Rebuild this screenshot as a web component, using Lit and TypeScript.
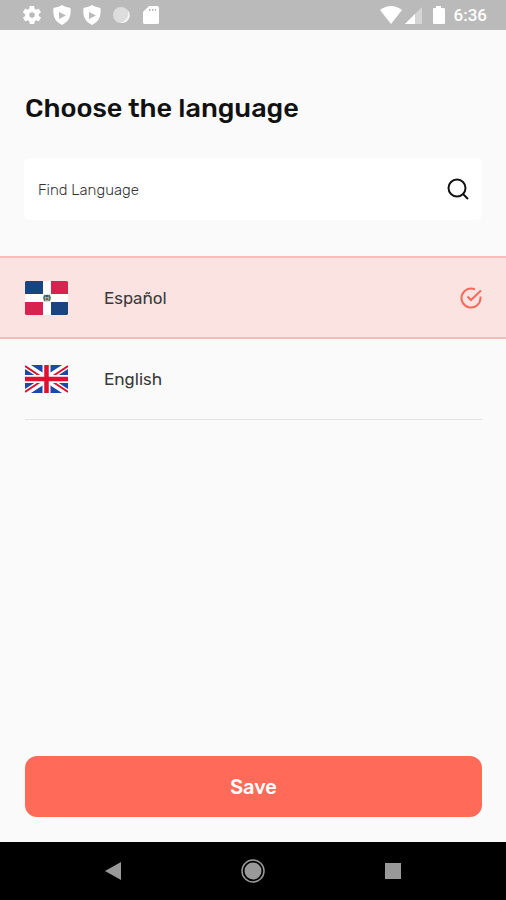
import { LitElement, html, css, svg } from "lit";
import { customElement, state } from "lit/decorators.js";
import { classMap } from "lit/directives/class-map.js";

const gear = svg`<path fill-rule="evenodd" d="M19.4 13c.1-.3.1-.7.1-1s0-.7-.1-1l2.100-1.600c.2-.2.3-.4.1-.6l-2-3.500c-.1-.2-.4-.3-.6-.2l-2.500 1c-.5-.4-1.100-.7-1.700-1l-.4-2.600c0-.3-.2-.4-.5-.4h-4c-.3 0-.5.1-.5.4l-.4 2.600c-.6.3-1.200.6-1.700 1l-2.500-1c-.2-.1-.5 0-.6.2l-2 3.500c-.1.2-.1.500.1.6L4.500 11c0 .3-.1.7-.1 1s0 .7.1 1l-2.100 1.600c-.2.2-.3.4-.1.6l2 3.500c.1.2.4.3.6.2l2.500-1c.5.4 1.100.7 1.700 1l.4 2.600c0 .3.2.4.5.4h4c.3 0 .5-.1.5-.4l.4-2.600c.6-.3 1.200-.6 1.700-1l2.500 1c.2.1.5 0 .6-.2l2-3.500c.1-.2.1-.5-.1-.6zM12 15a3 3 0 1 1 0-6 3 3 0 0 1 0 6z"/>`;

const shield = html`<svg class="glyph" viewBox="0 0 20 20" aria-hidden="true">
  <path d="M10 0C7 2 4 2.500 1.500 3 1 9 1.500 16 10 20c8.500-4 9-11 8.500-17C16 2.500 13 2 10 0z" />
  <path class="cut" d="M7 7l7 3.500-7 3.500z" />
</svg>`;

const flagDo = html`<svg class="flag do" viewBox="0 0 43 34" aria-hidden="true">
  <rect width="43" height="34" rx="1" fill="#fff" />
  <path fill="#1a4480" d="M1 0h17v13H0V1zM26 21h17v12l-1 1H26z" />
  <path fill="#d8234f" d="M26 0h16l1 1v12H26zM0 21h18v13H1l-1-1z" />
  <circle cx="22" cy="17" r="3.500" fill="#9fb09d" />
  <path d="M20 14q-2 3 0 6M24 14q2 3 0 6" fill="none" stroke="#4c7a58" stroke-width="1.500" />
  <path fill="#34558a" d="M20.500 14h3v2h-3z" />
  <path fill="#b3455a" d="M21 17h2v2h-2z" />
</svg>`;

const flagGb = html`<svg class="flag gb" viewBox="0 0 43 28" aria-hidden="true">
  <rect width="43" height="28" fill="#1c48a8" />
  <path d="M0 0l43 28M43 0L0 28" stroke="#fff" stroke-width="6.500" />
  <path d="M0 1l18 12M43 27L25 15M43 1L25 13M0 27l18-12" stroke="#e0102e" stroke-width="2" />
  <path d="M21.500 0v28M0 14h43" stroke="#fff" stroke-width="8" />
  <path d="M21.500 0v28M0 14h43" stroke="#e0102e" stroke-width="4.500" />
</svg>`;

const languages = [
  { code: "es", name: "Español", flag: flagDo },
  { code: "en", name: "English", flag: flagGb },
];

@customElement("status-bar")
export class StatusBar extends LitElement {
  static styles = css`
    :host {
      display: flex;
      justify-content: space-between;
      align-items: center;
      height: 30px;
      padding: 0 19px 0 22px;
      background: #bababa;
      color: #fff;
      font: 500 17px/20px Roboto, sans-serif;
    }
    .group { display: flex; align-items: center; gap: 10px; }
    .group.right { gap: 8px; }
    .network { display: flex; gap: 2px; }
    .glyph { display: block; width: 20px; height: 20px; fill: #fff; }
    .wifi { width: 24px; }
    .battery { width: 14px; }
    .cut { fill: #bababa; }
    .dim { opacity: 0.4; }
  `;

  render() {
    return html`
      <div class="group">
        <svg class="glyph" viewBox="1 1 22 22" aria-hidden="true">${gear}</svg>
        ${shield}${shield}
        <svg class="glyph" viewBox="0 0 20 20" aria-hidden="true">
          <circle cx="9" cy="10" r="8" opacity=".5" />
          <path d="M4 16.500A8.500 8.500 0 0 0 15 4.500Q20 9 16.500 14.500T4 16.500z" opacity=".8" />
        </svg>
        <svg class="glyph" viewBox="0 0 20 20" aria-hidden="true">
          <path d="M7 1h8q2 0 2 2v15q0 1-2 1H3q-2 0-2-1V7z" />
          <path class="cut" d="M7 4h1.500v2H7zM10 4h1.500v2H10zM13 4h1v2h-1z" />
        </svg>
      </div>
      <div class="group right">
        <div class="network">
          <svg class="glyph wifi" viewBox="0 0 24 20" aria-hidden="true">
            <path d="M2 5Q13-3 24 5L13 19z" />
          </svg>
          <svg class="glyph" viewBox="0 0 20 20" aria-hidden="true">
            <path class="dim" d="M18 2v17H1z" />
            <path d="M11 9v10H1z" />
          </svg>
        </div>
        <svg class="glyph battery" viewBox="0 0 14 20" aria-hidden="true">
          <path d="M4 1h5v2h2q2 0 2 1v14q0 1-1 1H2q-1 0-1-1V4q0-1 1-1h2z" />
        </svg>
        <span>6:36</span>
      </div>
    `;
  }
}

@customElement("nav-bar")
export class NavBar extends LitElement {
  static styles = css`
    :host {
      display: flex;
      justify-content: center;
      align-items: center;
      gap: 112px;
      height: 58px;
      background: #000;
    }
    button { padding: 0; border: 0; background: none; }
    .glyph { display: block; width: 28px; height: 28px; fill: #999; }
    .ring { fill: none; stroke: #999; stroke-width: 1.5; }
  `;

  render() {
    return html`
      <button aria-label="Back">
        <svg class="glyph" viewBox="0 0 28 28"><path d="M6 14l16-9v18z" /></svg>
      </button>
      <button aria-label="Home">
        <svg class="glyph" viewBox="0 0 28 28">
          <circle class="ring" cx="14" cy="14" r="11" />
          <circle cx="14" cy="14" r="8.500" />
        </svg>
      </button>
      <button aria-label="Recent apps">
        <svg class="glyph" viewBox="0 0 28 28"><path d="M6 6h16v16H6z" /></svg>
      </button>
    `;
  }
}

@customElement("app-root")
export class AppRoot extends LitElement {
  static styles = css`
    :host {
      display: flex;
      flex-direction: column;
      min-height: 100vh;
      background: #fafafa;
      color: #111;
      font-family: Rubik, Inter, sans-serif;
    }
    * { box-sizing: border-box; }
    main { flex: 1; display: flex; flex-direction: column; padding: 60px 0 25px; }
    h1 { margin: 0 25px; font-size: 27px; line-height: 36px; font-weight: 500; }
    .search {
      display: flex;
      align-items: center;
      margin: 32px 24px 36px;
      padding: 0 12px 0 14px;
      height: 62px;
      border-radius: 6px;
      background: #fff;
    }
    .search input {
      flex: 1;
      min-width: 0;
      height: 24px;
      padding: 2px 0 0;
      border: 0;
      outline: 0;
      background: none;
      color: #111;
      font: 300 15px/20px Rubik, Inter, sans-serif;
    }
    .search input::placeholder { color: #333; opacity: 1; }
    .icon { display: block; width: 24px; height: 24px; fill: none; stroke: #111; stroke-width: 2; }
    .list { margin: 0; padding: 0; border: 0; min-width: 0; }
    .option { display: block; padding: 0 24px 0 25px; }
    .row {
      display: flex;
      align-items: center;
      height: 81px;
      border-bottom: 1px solid #e2e2e2;
      font-size: 17px;
      line-height: 24px;
      font-weight: 400;
      color: #3a3a3a;
    }
    .selected { background: #fae3e1; border: solid #f8bcb9; border-width: 2px 0; }
    .selected .row { height: 79px; border-bottom: 0; }
    .flag { display: block; width: 43px; margin-right: 36px; }
    .do { height: 34px; }
    .gb { height: 28px; }
    .name { flex: 1; }
    .mark { display: grid; place-items: center; }
    .mark > * { grid-area: 1 / 1; }
    .mark input { appearance: none; width: 22px; height: 22px; margin: 0; }
    .tick { width: 22px; height: 22px; fill: none; stroke: #f66a5b; stroke-width: 2; pointer-events: none; }
    .save {
      height: 61px;
      margin: auto 24px 0 25px;
      border: 0;
      border-radius: 12px;
      background: #ff6b58;
      color: #fff;
      font: 500 20px/24px Rubik, Inter, sans-serif;
    }
  `;

  @state() private selected = "es";

  render() {
    return html`
      <status-bar></status-bar>
      <main>
        <h1>Choose the language</h1>
        <label class="search">
          <input type="text" placeholder="Find Language" aria-label="Find Language" />
          <svg class="icon" viewBox="0 0 24 24" aria-hidden="true">
            <circle cx="11" cy="11" r="8.500" />
            <path d="M17 17l5 5" />
          </svg>
        </label>
        <fieldset class="list" aria-label="Language">
          ${languages.map(
            (l) => html`
              <label class=${classMap({ option: true, selected: l.code === this.selected })}>
                <span class="row">
                  ${l.flag}
                  <span class="name">${l.name}</span>
                  <span class="mark">
                    <input
                      type="radio"
                      name="language"
                      .checked=${l.code === this.selected}
                      @change=${() => (this.selected = l.code)}
                    />
                    ${l.code === this.selected
                      ? html`<svg class="tick" viewBox="0 0 22 22" aria-hidden="true">
                          <path d="M15 2.400A9.500 9.500 0 1 0 20.500 11V9.500" />
                          <path d="M7.500 9.500l3.500 3.500L21 3.500" />
                        </svg>`
                      : ""}
                  </span>
                </span>
              </label>
            `
          )}
        </fieldset>
        <button class="save">Save</button>
      </main>
      <nav-bar></nav-bar>
    `;
  }
}
